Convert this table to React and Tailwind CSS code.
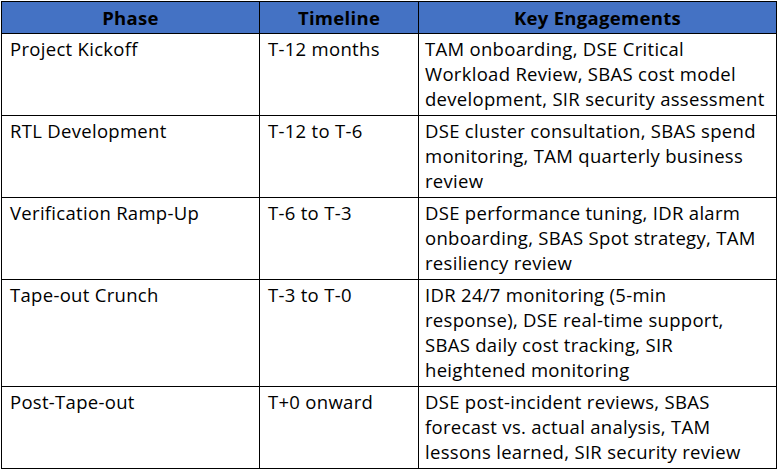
import React from 'react';

// 各フェーズの行データ
const rows = [
  {
    phase: 'Project Kickoff',
    timeline: 'T-12 months',
    engagements: ['TAM onboarding, DSE Critical', 'Workload Review, SBAS cost model', 'development, SIR security assessment'],
  },
  {
    phase: 'RTL Development',
    timeline: 'T-12 to T-6',
    engagements: ['DSE cluster consultation, SBAS spend', 'monitoring, TAM quarterly business', 'review'],
  },
  {
    phase: 'Verification Ramp-Up',
    timeline: 'T-6 to T-3',
    engagements: ['DSE performance tuning, IDR alarm', 'onboarding, SBAS Spot strategy, TAM', 'resiliency review'],
  },
  {
    phase: 'Tape-out Crunch',
    timeline: 'T-3 to T-0',
    engagements: ['IDR 24/7 monitoring (5-min', 'response), DSE real-time support,', 'SBAS daily cost tracking, SIR', 'heightened monitoring'],
  },
  {
    phase: 'Post-Tape-out',
    timeline: 'T+0 onward',
    engagements: ['DSE post-incident reviews, SBAS', 'forecast vs. actual analysis, TAM', 'lessons learned, SIR security review'],
  },
];

function App() {
  return (
    <div className="min-h-screen bg-white pl-px pt-px" style={{ fontFamily: '"Open Sans", "Noto Sans", sans-serif' }}>
      <table className="w-[775px] table-fixed border-collapse text-[18.5px] leading-[25px] tracking-[0.3px] text-black">
        <colgroup>
          <col className="w-[258px]" />
          <col className="w-[159px]" />
          <col className="w-[358px]" />
        </colgroup>
        <thead>
          <tr className="bg-[#4472c4] h-[32px]">
            <th className="border-[1.5px] border-black text-center font-bold py-0">Phase</th>
            <th className="border-[1.5px] border-black text-center font-bold py-0">Timeline</th>
            <th className="border-[1.5px] border-black text-center font-bold py-0">Key Engagements</th>
          </tr>
        </thead>
        <tbody>
          {rows.map((r) => (
            <tr key={r.phase}>
              <td className="border-[1.5px] border-black align-top pl-[8px] pt-[2px] pb-[4px] whitespace-nowrap">{r.phase}</td>
              <td className="border-[1.5px] border-black align-top pl-[8px] pt-[2px] pb-[4px] whitespace-nowrap">{r.timeline}</td>
              <td className="border-[1.5px] border-black align-top pl-[6px] pt-[2px] pb-[4px] whitespace-nowrap">
                {r.engagements.map((line) => (
                  <div key={line}>{line}</div>
                ))}
              </td>
            </tr>
          ))}
        </tbody>
      </table>
    </div>
  );
}

export default App;
